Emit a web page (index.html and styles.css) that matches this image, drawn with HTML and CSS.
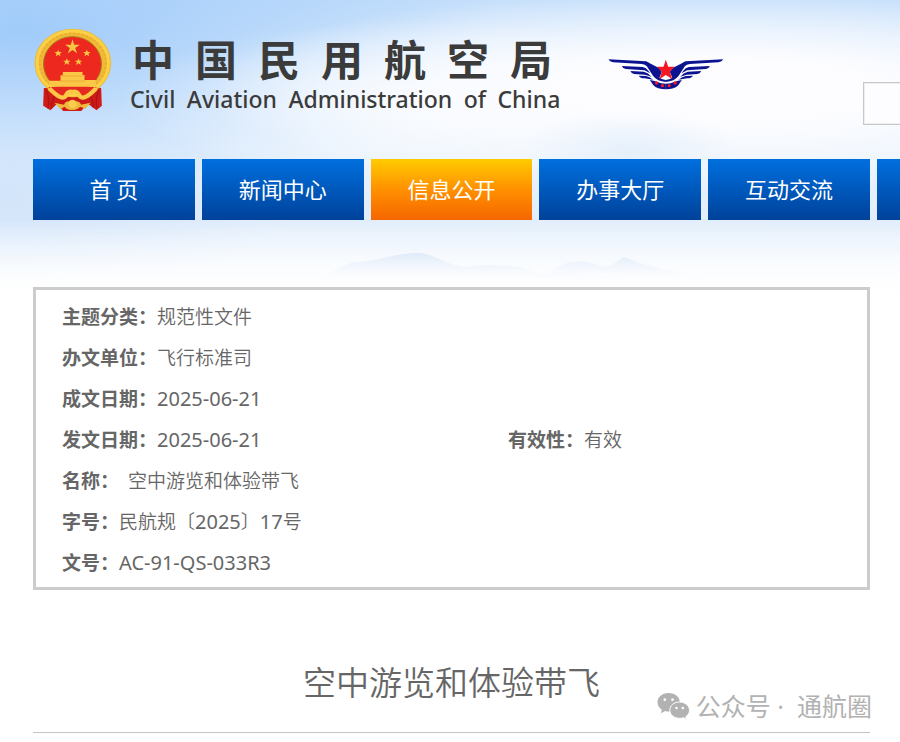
FILE: index.html
```html
<!DOCTYPE html>
<html lang="zh-CN">
<head>
<meta charset="utf-8">
<title>空中游览和体验带飞</title>
<link rel="stylesheet" href="styles.css">
</head>
<body>
<div class="page">
  <svg class="hills" viewBox="0 0 400 30" aria-hidden="true">
    <defs><linearGradient id="haze" x1="0" y1="0" x2="0" y2="30" gradientUnits="userSpaceOnUse"><stop offset="0" stop-color="#dfeaf9"/><stop offset=".9" stop-color="#f6f9fe" stop-opacity="0"/></linearGradient></defs>
    <path d="M0 27 C18 20 28 11 40 9 C62 9 82 -1 106 0 C122 3 132 12 150 14 C170 11 195 12 208 15 C222 20 228 23 240 20 L400 30 H0 Z" fill="url(#haze)"/>
    <path d="M224 24 C238 18 248 8 262 9 C272 6 280 12 290 14 C300 12 305 5 310 4 C325 12 345 15 370 21 L400 30 H215 Z" fill="url(#haze)"/>
  </svg>
  <header class="header">
    <div class="masthead">
      <svg class="emblem" viewBox="40 25 236 252" aria-hidden="true">
        <path d="M72 205 L244 205 L246 258 L230 272 L204 252 L184 274 L130 274 L112 252 L92 272 L70 258 Z" fill="#cf1b18"/>
        <path d="M78 212 Q92 238 84 266 M104 230 Q94 248 96 264 M238 212 Q224 238 232 266 M212 230 Q222 248 220 264" fill="none" stroke="#b01316" stroke-width="4"/>
        <ellipse cx="159" cy="130" rx="115" ry="103" fill="#f0b936"/>
        <ellipse cx="159" cy="130" rx="107" ry="96" fill="none" stroke="#fbd145" stroke-width="9"/>
        <ellipse cx="159" cy="130" rx="99" ry="88" fill="none" stroke="#e9ab33" stroke-width="6" stroke-dasharray="5 8"/>
        <ellipse cx="158" cy="133" rx="87" ry="82" fill="#ed291f" stroke="#a9791e" stroke-width="3"/>
        <g fill="#f7c544">
          <path d="M158 59 L163 75 L180 75 L166 85 L172 101 L158 91 L144 101 L150 85 L136 75 L153 75 Z"/>
          <path id="s" d="M115 90 L118 97 L126 97 L120 102 L122 110 L115 105 L108 110 L110 102 L104 97 L112 97 Z"/>
          <use href="#s" x="86"/><use href="#s" x="26" y="26"/><use href="#s" x="61" y="26"/>
        </g>
        <path d="M129 157 H188 V166 H194 V181 H228 V201 H88 V183 H122 V167 H129 Z" fill="#fac746"/>
        <path d="M126 169 H190 M120 184 H197" stroke="#e5a032" stroke-width="2"/>
        <path d="M85 202 H231 L214 222 Q200 236 186 228 Q174 210 158 212 Q144 210 132 228 Q120 236 104 222 Z" fill="#e52920"/>
        <path d="M88 206 Q125 244 137 230 Q144 212 158 217 Q172 212 180 230 Q193 244 229 206" fill="none" stroke="#fac746" stroke-width="13"/>
        <path d="M104 249 L132 255 Q139 240 157 247 Q177 240 184 255 L212 249 L197 267 L181 261 Q168 275 157 270 Q145 275 134 261 L122 269 Z" fill="#efb83a"/>
        <circle cx="158" cy="253" r="13" fill="#f9cc4b"/>
      </svg>
      <div class="brand">
        <h1 class="brand-cn">中&ensp;国&ensp;民&ensp;用&ensp;航&ensp;空&ensp;局</h1>
        <p class="brand-en">Civil&ensp;Aviation&ensp;Administration&ensp;of&ensp;China</p>
      </div>
      <svg class="wings" viewBox="20 38 350 96" aria-hidden="true">
        <g id="w" fill="#0c1390">
          <path d="M24 42 L136 48 Q144 50 150 60 L163 82 Q175 101 196 104 V110 Q170 108 158 92 L139 63 Q134 57 124 56 L38 51 Q27 49 24 42 Z"/>
          <path d="M64 62 L127 65 Q137 67 144 77 L149 84 L132 75 L76 71 Q66 69 64 62 Z"/>
          <path d="M90 77 L130 79 Q143 82 153 94 L133 88 L101 86 Q92 84 90 77 Z"/>
          <path d="M115 91 L136 92 Q147 94 158 103 L132 99 Q117 98 115 91 Z"/>
          <path d="M148 104 Q160 106 169 109 Q181 115 196 115 V132 Q170 132 158 119 Z"/>
          <path d="M136 48 L174 67 L184 79 L176 99 Q166 91 158 78 Z"/>
        </g>
        <use href="#w" transform="translate(392 0) scale(-1 1)"/>
        <path d="M196 43 L203 64 H222 L208 79 L215 101 L196 89 L177 101 L184 79 L170 64 H189 Z" fill="#f41622"/>
        <g fill="#f41622"><circle cx="168" cy="113" r="5"/><circle cx="186" cy="121" r="5"/><circle cx="206" cy="121" r="5"/><circle cx="224" cy="113" r="5"/></g>
      </svg>
      <input class="search" type="text" aria-label="搜索">
    </div>
    <nav class="nav">
      <a class="tab" href="#">首 页</a>
      <a class="tab" href="#">新闻中心</a>
      <a class="tab tab-active" href="#">信息公开</a>
      <a class="tab" href="#">办事大厅</a>
      <a class="tab" href="#">互动交流</a>
      <a class="tab" href="#" aria-label="更多"></a>
    </nav>
  </header>
  <main class="main">
    <dl class="info">
      <div class="row"><dt>主题分类：</dt><dd>规范性文件</dd></div>
      <div class="row"><dt>办文单位：</dt><dd>飞行标准司</dd></div>
      <div class="row"><dt>成文日期：</dt><dd><span class="latin">2025-06-21</span></dd></div>
      <div class="row half"><dt>发文日期：</dt><dd><span class="latin">2025-06-21</span></dd></div>
      <div class="row half"><dt>有效性：</dt><dd>有效</dd></div>
      <div class="row name"><dt>名称：</dt><dd>空中游览和体验带飞</dd></div>
      <div class="row"><dt>字号：</dt><dd>民航规〔<span class="latin">2025</span>〕<span class="latin">17</span>号</dd></div>
      <div class="row"><dt>文号：</dt><dd><span class="latin">AC-91-QS-033R3</span></dd></div>
    </dl>
    <h2 class="title">空中游览和体验带飞</h2>
  </main>
  <div class="watermark">
    <svg class="wechat" viewBox="50 38 104 84" aria-hidden="true">
      <path d="M87 41 C68 41 54 53 54 69 C54 79 59 86 67 91 L64 102 L77 95 Q87 98 97 95 C111 92 121 81 121 69 C121 53 107 41 87 41 Z" fill="#b2b2b2"/>
      <path d="M120 68 C103 68 91 79 91 93 C91 107 104 117 120 117 Q127 117 132 115 L141 120 L139 112 C146 107 150 101 150 93 C150 79 137 68 120 68 Z" fill="#b2b2b2" stroke="#fff" stroke-width="3"/>
      <g fill="#fff"><circle cx="76" cy="61" r="4"/><circle cx="99" cy="61" r="4"/><circle cx="111" cy="86" r="4"/><circle cx="130" cy="86" r="4"/></g>
    </svg>
    <span>公众号 ·&nbsp; 通航圈</span>
  </div>
</div>
</body>
</html>
```
FILE: styles.css
```css
* { box-sizing: border-box; }

body {
  margin: 0;
  background: #fff;
  color: #666;
  font-family: "Noto Sans CJK SC", "Microsoft YaHei", sans-serif;
}

h1, h2, p, dl, dd { margin: 0; }

.page {
  position: relative;
  overflow: hidden;
  padding-bottom: 8px;
  background:
    linear-gradient(to bottom, rgba(255,255,255,0) 220px, #fff 296px),
    radial-gradient(ellipse 300px 90px at 0 200px, rgba(200,222,249,.6), rgba(200,222,249,0)),
    radial-gradient(ellipse 110px 40px at 630px 150px, rgba(220,234,249,.6), rgba(220,234,249,0)),
    radial-gradient(ellipse 520px 100px at 720px 90px, #fdfdff 30%, rgba(253,253,255,0)),
    radial-gradient(ellipse 300px 80px at 420px 100px, rgba(250,252,255,.8), rgba(250,252,255,0)),
    radial-gradient(ellipse 480px 170px at 20px 30px, #a0cbfa, rgba(160,203,250,0)),
    linear-gradient(to bottom, #c5dffb 0, #e3effd 70px, #eaf3fd 150px, #e1edfb 220px, #fff 300px);
  background-color: #fff;
  background-size: 100% 300px;
  background-repeat: no-repeat;
}

.hills {
  position: absolute;
  left: 315px;
  top: 253px;
  width: 400px;
  height: 30px;
}

.header {
  position: relative;
  padding: 28px 30px 0 33px;
}

.masthead {
  display: flex;
  align-items: flex-start;
  height: 131px;
}

.emblem { flex: none; width: 79px; height: 84px; }

.brand { flex: none; width: 440px; margin-left: 18px; color: #3b3b3b; white-space: nowrap; }

.brand-cn { font-size: 42px; line-height: 60px; font-weight: 700; padding-left: 2px; }

.brand-en {
  font-family: "Noto Sans", "Open Sans", sans-serif;
  font-size: 23px;
  line-height: 22px;
  font-weight: 500;
}

.wings { flex: none; width: 117px; height: 32px; margin: 30px 0 0 37px; }

.search {
  flex: none;
  width: 240px;
  height: 43px;
  margin: 54px 0 0 139px;
  padding: 0 10px;
  border: 1px solid #c8c8c8;
  background: #fdfdff;
  box-shadow: inset 0 0 0 1px #eee;
}

.nav { display: flex; gap: 7px; }

.tab {
  flex: 0 0 calc((100% - 28px) / 5);
  height: 61px;
  background: linear-gradient(#006fde, #00429a);
  color: #fff;
  font-size: 22px;
  line-height: 59px;
  text-align: center;
  text-decoration: none;
}

.tab-active { background: linear-gradient(#ffcc00, #ff9000 50%, #f56600); }

.main { position: relative; padding: 67px 30px 0 33px; }

.info {
  display: grid;
  grid-template-columns: 446px 1fr;
  padding: 5px 26px;
  border: 3px solid #ccc;
  background: #fff;
  font-size: 19px;
  line-height: 41px;
}

.row { display: flex; align-items: baseline; height: 41px; grid-column: 1 / -1; }
.half { grid-column: auto; }
.row dt { font-weight: 700; }
.row dd { font-weight: 350; }
.latin { font-family: "Noto Sans", sans-serif; font-size: 20px; font-weight: 400; }
.name dd { margin-left: 9px; }

.title {
  padding: 66px 0 26px;
  border-bottom: 1px solid #c4c4c4;
  font-size: 33px;
  line-height: 50px;
  font-weight: 350;
  text-align: center;
}

.watermark {
  position: absolute;
  right: 28px;
  bottom: 17px;
  display: flex;
  align-items: center;
  gap: 5px;
  color: #b2b2b2;
  font-family: "Noto Sans", "Noto Sans CJK SC", sans-serif;
  font-size: 25px;
  line-height: 36px;
}

.wechat { width: 35px; height: 28px; }
```
